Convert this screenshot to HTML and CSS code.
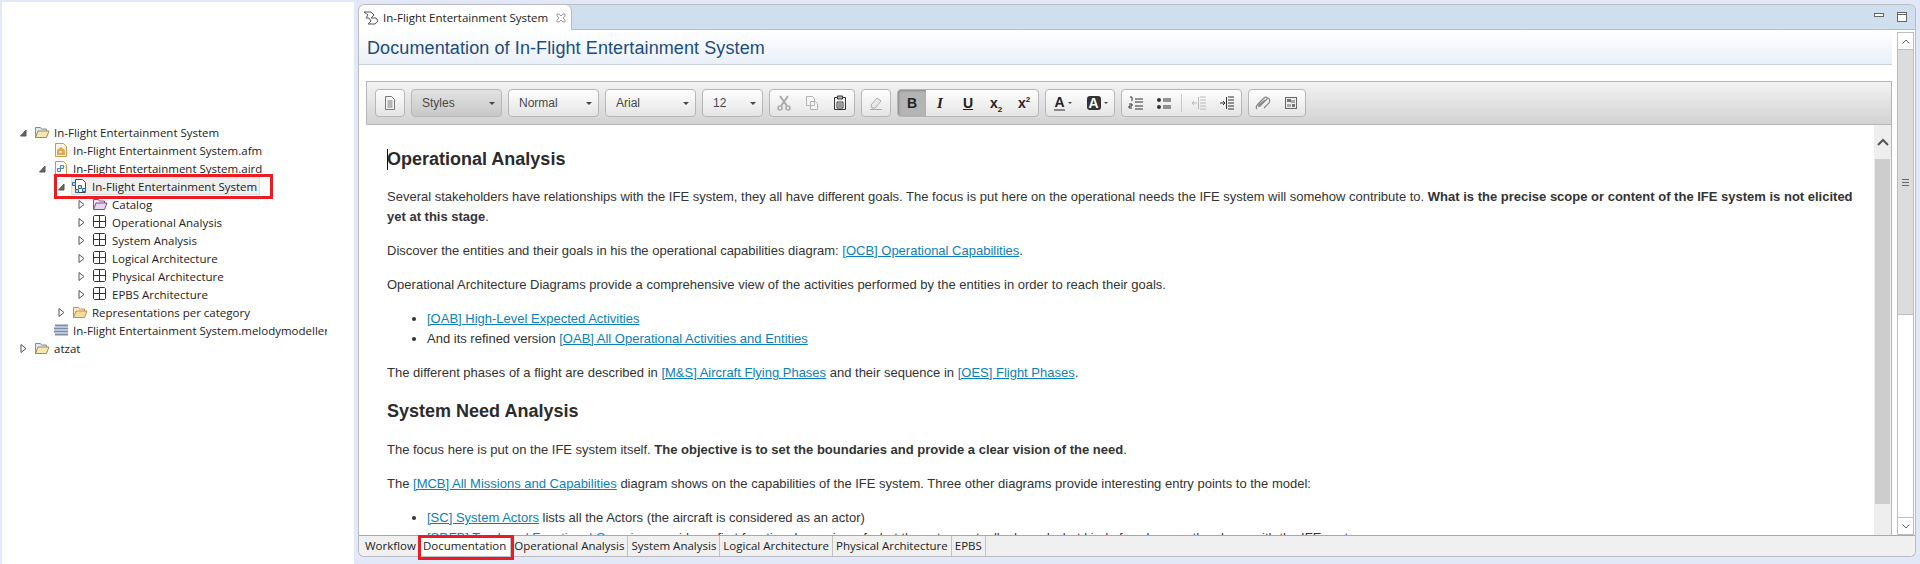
FILE: index.html
```html
<!DOCTYPE html>
<html lang="en">
<head>
  <meta charset="UTF-8">
  <title>In-Flight Entertainment System</title>
  <link rel="stylesheet" href="styles.css">
</head>
<body>
  <svg class="defs" width="0" height="0">
    <symbol id="folder" viewBox="0 0 16 16"><path d="M1.5 13.5V3.5h5l1 1.5h5v2" fill="#fbeec8" stroke="#b9924a"/><path d="M1.5 13.5l2.5-6.500h11l-2.500 6.500z" fill="#f6dca0" stroke="#b9924a"/></symbol>
    <symbol id="project" viewBox="0 0 16 16"><path d="M1.5 13.5V3.5h5l1 1.5h5v2" fill="#dfeaf5" stroke="#7d8ea3"/><path d="M1.5 13.5l2.5-6.500h11l-2.500 6.500z" fill="#f6e6b4" stroke="#a58c52"/></symbol>
    <symbol id="catalog" viewBox="0 0 16 16"><path d="M1.5 13.5V3.5h5l1 1.5h5v2" fill="#efe2f2" stroke="#7d4f93"/><path d="M1.5 13.5l2.5-6.500h11l-2.500 6.500z" fill="#e9d6ee" stroke="#7d4f93"/></symbol>
    <symbol id="pkg" viewBox="0 0 16 16"><path d="M2.500 1.500h10l1 1v10l-1 1h-10l-1-1v-10zM7.500 1.500v12M1.500 7.500h12" fill="none" stroke="#333"/></symbol>
    <symbol id="afm" viewBox="0 0 16 16"><path d="M2.500 1.500h8l3 3v10h-11z" fill="#fdf6e3" stroke="#c79a4c"/><path d="M4 8l4-3 4 3v5H4z" fill="#d9a95a"/><path d="M6 9h3v2H6z" fill="#f4e3bd"/></symbol>
    <symbol id="aird" viewBox="0 0 16 16"><path d="M2.500 1.500h8l3 3v10h-11z" fill="#fdfbf3" stroke="#c79a4c"/><path d="M4.500 8.500h3v3h-3zM7.500 5.500h3v3h-3z" fill="#d5e6f5" stroke="#4f86bb"/></symbol>
    <symbol id="session" viewBox="0 0 16 16"><path d="M3.500 1.500h7l3 3v10h-10z" fill="#fff" stroke="#444"/><path d="M.5 4.500h3v3h-3zM6.500 7.500h3v3h-3zM3.500 11.500h3v3h-3zM10.500 10.500h3v3h-3z" fill="#bcd8ee" stroke="#2f6f9f"/></symbol>
    <symbol id="stack" viewBox="0 0 16 16"><path d="M2 3.500h13M1 6.500h14M1 9.500h14M2 12.500h13" stroke="#7b8ba8" stroke-width="2"/></symbol>
    <symbol id="open" viewBox="0 0 7 9"><path d="M1 .5l5 4-5 4z" fill="#fff" stroke="#555"/></symbol>
    <symbol id="expanded" viewBox="0 0 7 9"><path d="M6 2v6H.500z" fill="#666" stroke="#555"/></symbol>
  </svg>

  <div class="app">
    <aside class="explorer">
      <div class="row d0"><svg class="twisty"><use href="#expanded"/></svg><svg class="ico"><use href="#project"/></svg><span>In-Flight Entertainment System</span></div>
      <div class="row d1"><span class="twisty"></span><svg class="ico"><use href="#afm"/></svg><span>In-Flight Entertainment System.afm</span></div>
      <div class="row d1"><svg class="twisty"><use href="#expanded"/></svg><svg class="ico"><use href="#aird"/></svg><span>In-Flight Entertainment System.aird</span></div>
      <div class="row d2"><svg class="twisty"><use href="#expanded"/></svg><div class="selected"><svg class="ico"><use href="#session"/></svg><span>In-Flight Entertainment System</span></div><div class="callout tree-callout"></div></div>
      <div class="row d3"><svg class="twisty"><use href="#open"/></svg><svg class="ico"><use href="#catalog"/></svg><span>Catalog</span></div>
      <div class="row d3"><svg class="twisty"><use href="#open"/></svg><svg class="ico"><use href="#pkg"/></svg><span>Operational Analysis</span></div>
      <div class="row d3"><svg class="twisty"><use href="#open"/></svg><svg class="ico"><use href="#pkg"/></svg><span>System Analysis</span></div>
      <div class="row d3"><svg class="twisty"><use href="#open"/></svg><svg class="ico"><use href="#pkg"/></svg><span>Logical Architecture</span></div>
      <div class="row d3"><svg class="twisty"><use href="#open"/></svg><svg class="ico"><use href="#pkg"/></svg><span>Physical Architecture</span></div>
      <div class="row d3"><svg class="twisty"><use href="#open"/></svg><svg class="ico"><use href="#pkg"/></svg><span>EPBS Architecture</span></div>
      <div class="row d2"><svg class="twisty"><use href="#open"/></svg><svg class="ico"><use href="#folder"/></svg><span>Representations per category</span></div>
      <div class="row d1"><span class="twisty"></span><svg class="ico"><use href="#stack"/></svg><span class="clipped">In-Flight Entertainment System.melodymodeller</span></div>
      <div class="row d0"><svg class="twisty"><use href="#open"/></svg><svg class="ico"><use href="#project"/></svg><span>atzat</span></div>
    </aside>

    <main class="editor">
      <div class="tabbar">
        <div class="tab">
          <svg class="ico" viewBox="0 0 16 16"><path d="M1 2h7l3 3-3 3h5l2 3-3 3H5l3-3-2-3H3l2-3z" fill="#fff" stroke="#555"/></svg>
          <span>In-Flight Entertainment System</span>
          <svg class="tab-close" viewBox="0 0 10 10"><path d="M1 1h2l2 2 2-2h2v2L7 5l2 2v2H7L5 7 3 9H1V7l2-2-2-2z" fill="#fff" stroke="#999"/></svg>
        </div>
        <div class="view-btns">
          <svg class="min-btn" viewBox="0 0 10 4"><rect x=".5" y=".5" width="9" height="3" fill="#fff" stroke="#666"/></svg>
          <svg class="max-btn" viewBox="0 0 10 10"><rect x=".5" y=".5" width="9" height="9" fill="#fff" stroke="#666"/><path d="M1 2.500h8" stroke="#666"/></svg>
        </div>
      </div>

      <div class="sheet">
        <div class="sheet-main">
          <h2 class="form-title">Documentation of In-Flight Entertainment System</h2>
          <div class="rte">
            <div class="toolbar">
              <div class="group"><div class="btn">
                <svg class="tool" viewBox="0 0 16 16"><path d="M3.500 1.500h6l3 3v10h-9zM5.500 6h5M5.500 8h5M5.500 10h5M5.500 12h5" fill="#f4f4f4" stroke="#777"/></svg>
              </div></div>
              <div class="combo on w-styles"><span>Styles</span><i class="caret"></i></div>
              <div class="combo w-format"><span>Normal</span><i class="caret"></i></div>
              <div class="combo w-format"><span>Arial</span><i class="caret"></i></div>
              <div class="combo w-size"><span>12</span><i class="caret"></i></div>
              <div class="group">
                <div class="btn"><svg class="tool" viewBox="0 0 16 16"><path d="M4 1l7 10M12 1L5 11" stroke="#aaa" stroke-width="2"/><circle cx="4" cy="13" r="2" fill="none" stroke="#aaa" stroke-width="1.500"/><circle cx="12" cy="13" r="2" fill="none" stroke="#aaa" stroke-width="1.500"/></svg></div>
                <div class="btn"><svg class="tool" viewBox="0 0 16 16"><path d="M2.500 1.500h6l2 2v7h-8zM6.500 6.500h5l2 2v6h-7z" fill="#f6f6f6" stroke="#b4b4b4"/></svg></div>
                <div class="btn"><svg class="tool" viewBox="0 0 16 16"><path d="M2.500 2.500h11v12h-11z" fill="none" stroke="#333"/><path d="M5.500 1h5v3h-5z" fill="#bbb" stroke="#333"/><path d="M5 7h6v6H5zM6 9h4M6 11h4" fill="#fff" stroke="#333"/></svg></div>
              </div>
              <div class="group"><div class="btn">
                <svg class="tool" viewBox="0 0 16 16"><path d="M3 10l6-7 4 3-6 7H4z" fill="#e8e8e8" stroke="#aaa"/><path d="M2 14.500h12" stroke="#aaa"/></svg>
              </div></div>
              <div class="group">
                <div class="btn pressed"><b class="glyph">B</b></div>
                <div class="btn"><i class="glyph serif">I</i></div>
                <div class="btn"><b class="glyph under">U</b></div>
                <div class="btn"><b class="glyph">x<sub>2</sub></b></div>
                <div class="btn"><b class="glyph">x<sup>2</sup></b></div>
              </div>
              <div class="group">
                <div class="btn wide"><b class="glyph color-a">A</b><i class="caret small"></i></div>
                <div class="btn wide"><b class="glyph back-a">A</b><i class="caret small"></i></div>
              </div>
              <div class="group">
                <div class="btn"><svg class="tool" viewBox="0 0 16 16"><path d="M7 4h8M7 7h8M7 11h8M7 14h8" stroke="#333" stroke-width="1.200"/><path d="M2 2h2v4M1 9h3v2H1v2h3" fill="none" stroke="#333"/></svg></div>
                <div class="btn"><svg class="tool" viewBox="0 0 16 16"><path d="M7 4h8M7 6h8M7 11h8M7 13h8" stroke="#333" stroke-width="1.200"/><circle cx="3" cy="5" r="2" fill="#333"/><circle cx="3" cy="12" r="2" fill="#333"/></svg></div>
                <span class="sep"></span>
                <div class="btn"><svg class="tool" viewBox="0 0 16 16"><path d="M9 2h6M9 5h6M9 8h6M9 11h6M9 14h6M6 8H1M3 6L1 8l2 2M7.500 2v12" fill="none" stroke="#bbb"/></svg></div>
                <div class="btn"><svg class="tool" viewBox="0 0 16 16"><path d="M9 2h6M9 5h6M9 8h6M9 11h6M9 14h6M1 8h5M4 6l2 2-2 2M7.500 2v12" fill="none" stroke="#333"/></svg></div>
              </div>
              <div class="group">
                <div class="btn"><svg class="tool" viewBox="0 0 16 16"><path d="M2 14c-2-2 0-4 1-5l6-6c2-2 4 0 3 1L5 11c-1 1-2 0-1-1l6-5M9 13l5-5c1-2 1-4-1-5" fill="none" stroke="#888" stroke-width="1.200"/></svg></div>
                <div class="btn"><svg class="tool" viewBox="0 0 16 16"><rect x="2.500" y="2.500" width="11" height="11" fill="#eee" stroke="#666"/><path d="M4 4h4v3H4zM9 9h3v3H9z" fill="#777"/><path d="M8 5h4v3H8zM4 9h4v3H4z" fill="#aaa"/></svg></div>
              </div>
            </div>

            <div class="rte-body">
              <article class="doc">
                <h3 class="first"><span class="cursor"></span>Operational Analysis</h3>
                <p>Several stakeholders have relationships with the IFE system, they all have different goals. The focus is put here on the operational needs the IFE system will somehow contribute to. <b>What is the precise scope or content of the IFE system is not elicited yet at this stage</b>.</p>
                <p>Discover the entities and their goals in his the operational capabilities diagram: <a href="#">[OCB] Operational Capabilities</a>.</p>
                <p>Operational Architecture Diagrams provide a comprehensive view of the activities performed by the entities in order to reach their goals.</p>
                <ul>
                  <li><a href="#">[OAB] High-Level Expected Activities</a></li>
                  <li>And its refined version <a href="#">[OAB] All Operational Activities and Entities</a></li>
                </ul>
                <p>The different phases of a flight are described in <a href="#">[M&amp;S] Aircraft Flying Phases</a> and their sequence in <a href="#">[OES] Flight Phases</a>.</p>
                <h3>System Need Analysis</h3>
                <p>The focus here is put on the IFE system itself. <b>The objective is to set the boundaries and provide a clear vision of the need</b>.</p>
                <p>The <a href="#">[MCB] All Missions and Capabilities</a> diagram shows on the capabilities of the IFE system. Three other diagrams provide interesting entry points to the model:</p>
                <ul>
                  <li><a href="#">[SC] System Actors</a> lists all the Actors (the aircraft is considered as an actor)</li>
                  <li><a href="#">[SDFB] Top-Level Functional Overview</a> provides a first functional overview of what the actors actually do and what kind of exchanges they have with the IFE system</li>
                </ul>
              </article>
              <div class="rte-scroll">
                <div class="rte-up"><svg viewBox="0 0 12 8"><path d="M1 7l5-5 5 5" fill="none" stroke="#555" stroke-width="2"/></svg></div>
                <div class="rte-thumb"></div>
              </div>
            </div>
          </div>
        </div>

        <div class="page-scroll">
          <div class="arrow"><svg viewBox="0 0 8 5"><path d="M.5 4.500L4 1l3.500 3.500" fill="none" stroke="#666"/></svg></div>
          <div class="page-thumb"><span class="grip"></span></div>
          <div class="page-track"></div>
          <div class="arrow"><svg viewBox="0 0 8 5"><path d="M.5 .5L4 4l3.500-3.500" fill="none" stroke="#666"/></svg></div>
        </div>
      </div>

      <div class="pages">
        <div class="page">Workflow</div>
        <div class="page current">Documentation<div class="callout page-callout"></div></div>
        <div class="page">Operational Analysis</div>
        <div class="page">System Analysis</div>
        <div class="page">Logical Architecture</div>
        <div class="page">Physical Architecture</div>
        <div class="page">EPBS</div>
      </div>
    </main>
  </div>
</body>
</html>
```

FILE: styles.css
```css
* { box-sizing: border-box; }
html, body { height: 100%; }
body {
  margin: 0;
  overflow: hidden;
  background: #e2e8f7;
  font-family: "Open Sans", sans-serif;
  font-size: 11.5px;
  color: #222;
}
.defs { position: absolute; }
.app {
  display: flex;
  height: 564px;
  padding-left: 2px;
}

/* project explorer */
.explorer {
  width: 352px;
  height: 562px;
  margin-top: 2px;
  padding: 121px 0 0 1px;
  background: #fff;
  overflow: hidden;
}
.row {
  position: relative;
  display: flex;
  align-items: center;
  height: 18px;
  white-space: nowrap;
}
.d0 { padding-left: 17px; }
.d1 { padding-left: 36px; }
.d2 { padding-left: 55px; }
.d3 { padding-left: 75px; }
.twisty {
  flex: none;
  width: 7px;
  height: 9px;
  margin-right: 7px;
}
.ico {
  flex: none;
  width: 16px;
  height: 16px;
  margin-right: 4px;
}
.clipped {
  max-width: 254px;
  overflow: hidden;
}
.selected {
  display: flex;
  align-items: center;
  height: 18px;
  padding-right: 2px;
  background: #eee;
  border: 1px solid #ddd;
  margin-left: -1px;
}
.callout {
  position: absolute;
  border: 3px solid #ed1c24;
  pointer-events: none;
}
.tree-callout {
  left: 51px;
  top: -3px;
  width: 219px;
  height: 25px;
}

/* editor */
.editor {
  flex: 1;
  display: flex;
  flex-direction: column;
  margin: 4px 4px 7px 4px;
  background: #fff;
  border: 1px solid #b9bcc2;
  border-top: 0;
  border-radius: 6px;
}
.tabbar {
  display: flex;
  justify-content: space-between;
  flex: none;
  height: 26px;
  background: #cfdfee;
  border-top: 1px solid #b9bcc2;
  border-bottom: 1px solid #b9bcc2;
  border-radius: 6px 6px 0 0;
}
.tab {
  display: flex;
  align-items: center;
  flex: none;
  width: 213px;
  height: 25px;
  padding: 0 6px 0 4px;
  white-space: nowrap;
  background: #fff;
  border-right: 1px solid #b9bcc2;
  border-radius: 6px 6px 0 0;
}
.tab .ico { margin-right: 4px; }
.tab-close {
  flex: none;
  width: 10px;
  height: 10px;
  margin-left: 8px;
}
.view-btns {
  display: flex;
  align-items: flex-start;
  gap: 13px;
  padding: 7px 8px 0 0;
}
.min-btn { width: 10px; height: 4px; margin-top: 1px; }
.max-btn { width: 10px; height: 10px; }

.sheet {
  flex: 1;
  display: flex;
  min-height: 0;
}
.sheet-main {
  flex: 1;
  min-width: 0;
  display: flex;
  flex-direction: column;
}
.form-title {
  flex: none;
  height: 35px;
  margin: 0;
  padding: 8px 0 0 8px;
  font: 400 18px "Liberation Sans", sans-serif;
  letter-spacing: .1px;
  color: #1c4c7e;
  background: linear-gradient(#fff, #e9f0f8);
  border-bottom: 1px solid #c7d3df;
}
.rte {
  flex: 1;
  min-height: 0;
  display: flex;
  flex-direction: column;
  margin: 16px 0 0 7px;
  border-right: 1px solid #b6b6b6;
}
.toolbar {
  display: flex;
  gap: 6px;
  flex: none;
  height: 44px;
  padding: 7px 8px;
  background: linear-gradient(#f3f3f3, #d2d2d2);
  border: 1px solid #b6b6b6;
  border-right: 0;
}
.group, .combo {
  display: flex;
  align-items: center;
  height: 28px;
  background: linear-gradient(#fff, #e4e4e4);
  border: 1px solid #b6b6b6;
  border-radius: 4px;
}
.combo {
  justify-content: space-between;
  padding: 0 6px 0 10px;
  font: 12px "Liberation Sans", sans-serif;
  color: #474747;
}
.combo.on { background: linear-gradient(#e2e2e2, #c8c8c8); }
.w-styles, .w-format { width: 91px; }
.w-size { width: 61px; }
.caret {
  width: 0;
  height: 0;
  border: 3px solid transparent;
  border-top: 3px solid #474747;
  border-bottom: 0;
}
.btn {
  display: flex;
  align-items: center;
  justify-content: center;
  width: 28px;
  height: 26px;
}
.btn.wide { width: 34px; gap: 3px; }
.btn.pressed {
  background: #b4b4b4;
  box-shadow: inset 1px 1px 2px #8a8a8a;
  border-radius: 3px 0 0 3px;
}
.tool { width: 16px; height: 16px; }
.glyph {
  font: 700 14px "Liberation Sans", sans-serif;
  color: #222;
}
.glyph sub, .glyph sup { font-size: 8px; line-height: 0; }
.serif { font: italic 700 15px "Liberation Serif", serif; }
.under { text-decoration: underline; }
.color-a { border-bottom: 2px solid #888; line-height: 14px; }
.back-a {
  width: 14px;
  line-height: 14px;
  text-align: center;
  color: #fff;
  background: #333;
  border-radius: 3px;
}
.caret.small { border-width: 2.500px; border-bottom: 0; }
.sep { width: 1px; height: 18px; margin: 0 3px; background: #c8c8c8; }

.rte-body {
  flex: 1;
  min-height: 0;
  display: flex;
}
.doc {
  flex: 1;
  min-width: 0;
  padding: 0 19px 0 21px;
  overflow: hidden;
  font: 13px/20px "Liberation Sans", sans-serif;
  color: #333;
}
.doc h3 {
  margin: 16px 0 17px;
  font-size: 18px;
  line-height: 24px;
  color: #2b2b2b;
}
.doc h3.first { margin-top: 22px; margin-bottom: 16px; }
.cursor {
  display: inline-block;
  width: 1px;
  height: 21px;
  margin-right: -1px;
  vertical-align: -5px;
  background: #111;
}
.doc p { margin: 0 0 14px; }
.doc ul { margin: 0 0 13px; padding-left: 40px; }
.doc li { line-height: 20px; }
.doc ul:first-of-type { margin-bottom: 14px; }
.doc a { color: #0b7fb8; }
.rte-scroll {
  flex: none;
  width: 17px;
  display: flex;
  flex-direction: column;
  background: #eee;
}
.rte-up {
  display: flex;
  align-items: center;
  justify-content: center;
  height: 34px;
}
.rte-up svg { width: 12px; height: 8px; }
.rte-thumb {
  height: 345px;
  margin: 0 1px;
  background: #cdcdcd;
}

.page-scroll {
  flex: none;
  width: 17px;
  margin: 2px 1px 0 5px;
  display: flex;
  flex-direction: column;
  border: 1px solid #bdbdbd;
}
.arrow {
  flex: none;
  display: flex;
  align-items: center;
  justify-content: center;
  height: 16px;
  background: #fff;
}
.arrow svg { width: 8px; height: 5px; }
.page-thumb {
  flex: none;
  display: flex;
  align-items: center;
  justify-content: center;
  height: 266px;
  background: #dcdcdc;
  border-top: 1px solid #bdbdbd;
  border-bottom: 1px solid #bdbdbd;
}
.grip {
  width: 7px;
  height: 7px;
  border-top: 1px solid #666;
  border-bottom: 1px solid #666;
  background: linear-gradient(transparent 2px, #666 2px, #666 3px, transparent 3px);
}
.page-track { flex: 1; background: #fff; border-bottom: 1px solid #bdbdbd; }

.pages {
  display: flex;
  flex: none;
  height: 21px;
  padding-left: 3px;
  background: #f0f0f0;
  border-top: 1px solid #a9a9a9;
  border-radius: 0 0 6px 6px;
}
.page {
  position: relative;
  padding: 0 3px;
  line-height: 19px;
  white-space: nowrap;
  border-right: 1px solid #c2c2c2;
}
.page.current { padding-right: 4px; background: #fff; }
.page-callout {
  left: -2px;
  top: -1px;
  right: -4px;
  height: 25px;
}
```
